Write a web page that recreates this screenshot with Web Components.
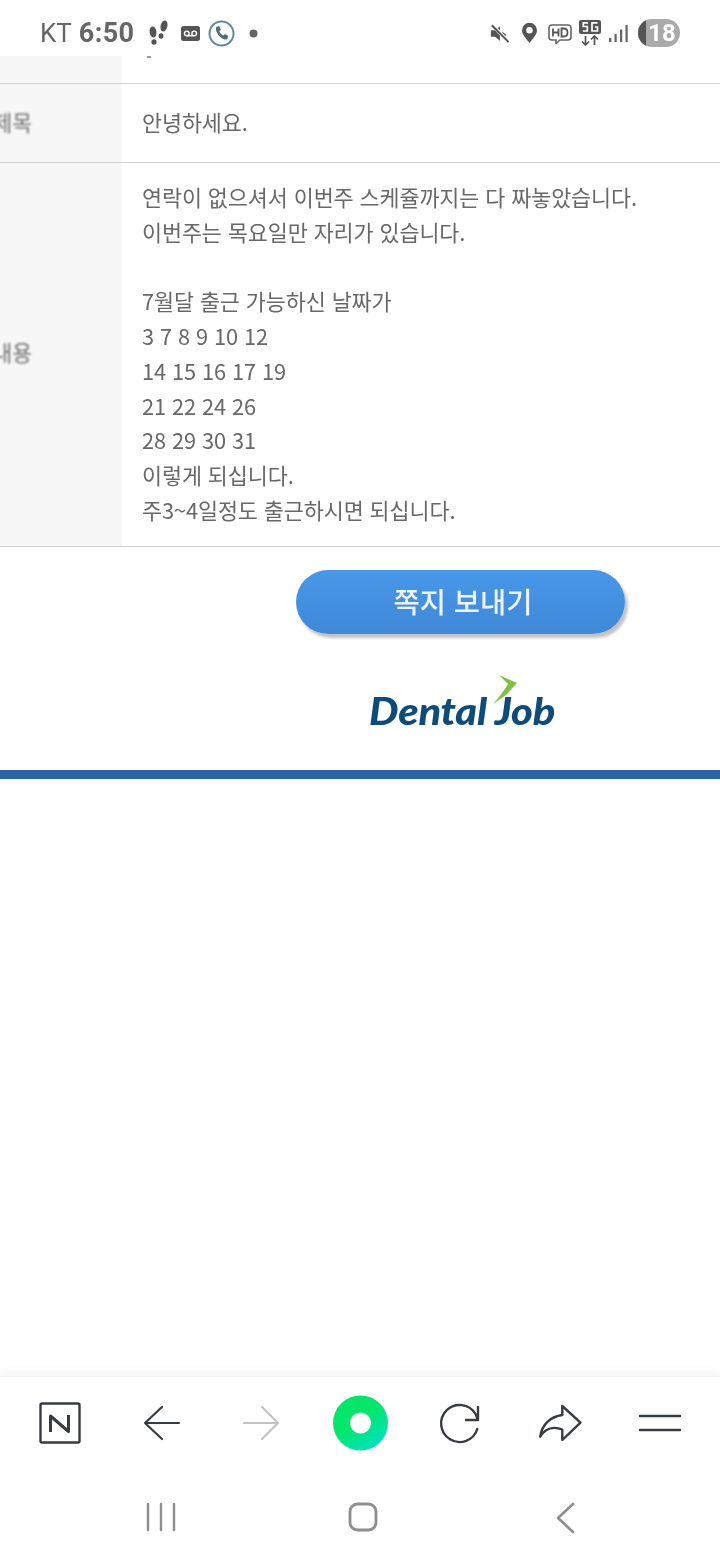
<!DOCTYPE html>
<html lang="ko">
<head>
<meta charset="utf-8">
<title>쪽지</title>
<style>
  html, body { margin: 0; padding: 0; background: #fff; }
  body { font-family: "Noto Sans CJK KR", "Noto Sans", sans-serif; }
  phone-page { width: 720px; height: 1560px; }
</style>
</head>
<body>
<phone-page>
  <status-bar></status-bar>
  <message-table>
    <message-row slot="rows" partial></message-row>
    <message-row slot="rows" label="제목" style="--row-h:78px;--pad-top:21px;--label-shift:-2px">안녕하세요.</message-row>
    <message-row slot="rows" label="내용" style="--row-h:383px;--pad-top:17px;--label-shift:-3px">연락이 없으셔서 이번주 스케쥴까지는 다 짜놓았습니다.
이번주는 목요일만 자리가 있습니다.

7월달 출근 가능하신 날짜가
3 7 8 9 10 12
14 15 16 17 19
21 22 24 26
28 29 30 31
이렇게 되십니다.
주3~4일정도 출근하시면 되십니다.</message-row>
  </message-table>
  <send-button>쪽지 보내기</send-button>
  <brand-logo></brand-logo>
  <footer-rule></footer-rule>
  <browser-toolbar></browser-toolbar>
  <nav-buttons></nav-buttons>
</phone-page>

<script>
class PhonePage extends HTMLElement {
  constructor() {
    super();
    this.attachShadow({ mode: "open" }).innerHTML = `
      <style>
        :host { display: flex; flex-direction: column; overflow: hidden; background: #fff; }
      </style>
      <slot></slot>`;
  }
}

class StatusBar extends HTMLElement {
  constructor() {
    super();
    this.attachShadow({ mode: "open" }).innerHTML = `
      <style>
        :host { display: flex; align-items: center; height: 56px; padding: 0 40px 0 40px; box-sizing: border-box;
                font-family: Roboto, "Liberation Sans", sans-serif; color: #666; filter: blur(.35px); flex: none; }
        .left, .right { display: flex; align-items: center; height: 66px; margin-top: 10px; }
        .right { margin-left: auto; }
        .carrier { font-size: 26px; }
        .time { font-size: 27px; font-weight: 700; margin-left: 7px; letter-spacing: .4px; }
        svg { display: block; flex: none; }
        .battery { position: relative; width: 42px; height: 28px; border-radius: 14px; background: #aaa; overflow: hidden;
                   color: #fff; font-size: 24px; font-weight: 700; text-align: center; line-height: 28px; margin-left: 10px; }
        .battery::before { content: ""; position: absolute; left: 0; top: 0; bottom: 0; width: 8px; background: #555; }
        .battery span { position: relative; margin-left: 6px; }
      </style>
      <div class="left">
        <span class="carrier">KT</span><span class="time">6:50</span>
        <svg width="24" height="28" viewBox="0 0 24 28" style="margin-left:12px" fill="#555">
          <ellipse cx="6" cy="13" rx="3.4" ry="5.6" transform="rotate(-6 6 13)"/>
          <ellipse cx="7" cy="23" rx="2.6" ry="2.8"/>
          <ellipse cx="17" cy="7" rx="3.4" ry="5.6" transform="rotate(14 17 7)"/>
          <ellipse cx="14" cy="17" rx="2.5" ry="2.8"/>
        </svg>
        <svg width="19" height="15" viewBox="0 0 19 15" style="margin-left:10px">
          <rect width="19" height="15" rx="2.5" fill="#555"/>
          <circle cx="5.8" cy="7.4" r="2.3" fill="none" stroke="#fff" stroke-width="1.4"/>
          <circle cx="13.2" cy="7.4" r="2.3" fill="none" stroke="#fff" stroke-width="1.4"/>
          <path d="M5.8 9.7h7.4" stroke="#fff" stroke-width="1.4"/>
        </svg>
        <svg width="27" height="27" viewBox="0 0 27 27" style="margin-left:8px">
          <circle cx="13.5" cy="13.5" r="12" fill="none" stroke="#64889c" stroke-width="2"/>
          <path d="M8.6 6.8l2.6-.8 1.7 3.8-1.600 1.400c.7 1.800 2.200 3.500 4 4.400l1.600-1.500 3.400 2-.9 2.700c-.5.8-1.600.9-2.600.6-4-1.200-7.600-5-8.800-9.500-.2-1.200 0-2.400.6-3.100z" fill="#4f6f80"/>
        </svg>
        <svg width="9" height="9" viewBox="0 0 9 9" style="margin-left:14px"><circle cx="4.5" cy="4.5" r="4" fill="#666"/></svg>
      </div>
      <div class="right">
        <svg width="20" height="21" viewBox="0 0 22 22">
          <path d="M1 7.5h4.5L11 3v16l-5.5-4.500H1z" fill="#555"/>
          <path d="M13 8.500l4.500 3.500-1 5z" fill="#555"/>
          <path d="M2.500 1.500l18 19" stroke="#fff" stroke-width="4"/>
          <path d="M2 2l18.500 18.500" stroke="#555" stroke-width="2.200"/>
        </svg>
        <svg width="17" height="22" viewBox="0 0 17 22" style="margin-left:11px">
          <path d="M8.500 21C4 15.500 1 12 1 8.300a7.500 7.500 0 0 1 15 0c0 3.700-3 7.200-7.500 12.700z" fill="#555"/>
          <circle cx="8.500" cy="8.300" r="3.200" fill="#fff"/>
        </svg>
        <svg width="24" height="20" viewBox="0 0 24 20" style="margin-left:10px;margin-top:2px">
          <path d="M4 1h16a3 3 0 0 1 3 3v9a3 3 0 0 1-3 3h-8l-4 3.500V16H4a3 3 0 0 1-3-3V4a3 3 0 0 1 3-3z" fill="#fff" stroke="#666" stroke-width="1.600"/>
          <path d="M5 4.500v8M10.500 4.500v8M5 8.500h5.500M13.500 4.500v8h2.500c2 0 3.500-1.200 3.500-4s-1.500-4-3.500-4z" fill="none" stroke="#555" stroke-width="1.800"/>
        </svg>
        <svg width="22" height="26" viewBox="0 0 22 26" style="margin-left:7px;margin-top:-1px">
          <rect width="22" height="14" rx="2" fill="#555"/>
          <path d="M9 2.800H4.300v3.700H8.300v4.500H3.800M18.500 2.800h-5.500v8.200h5.500V7h-2.500" fill="none" stroke="#fff" stroke-width="1.700"/>
          <path d="M6.500 16v9M3 21.500l3.500 3.500 3.500-3.500M15.500 25v-9M12 19.500l3.500-3.500 3.500 3.500" fill="none" stroke="#555" stroke-width="1.700"/>
        </svg>
        <svg width="19" height="17" viewBox="0 0 19 17" style="margin-left:8px;margin-top:1px">
          <rect x="0" y="13" width="2.400" height="4" fill="#666"/>
          <rect x="5.500" y="9" width="2.200" height="8" fill="#666"/>
          <rect x="11" y="4.500" width="2.200" height="12.500" fill="#666"/>
          <rect x="16.500" y="0" width="2.200" height="17" fill="#666"/>
        </svg>
        <div class="battery"><span>18</span></div>
      </div>`;
  }
}

class MessageTable extends HTMLElement {
  constructor() {
    super();
    this.attachShadow({ mode: "open" }).innerHTML = `
      <style>
        :host { display: block; flex: none; overflow: hidden; }
      </style>
      <slot name="rows"></slot>`;
  }
}

class MessageRow extends HTMLElement {
  constructor() {
    super();
    const partial = this.hasAttribute("partial");
    this.attachShadow({ mode: "open" }).innerHTML = `
      <style>
        :host { display: grid; grid-template-columns: 122px 1fr; border-bottom: 1px solid #d2d2d2;
                height: var(--row-h, 27px); box-sizing: content-box; overflow: hidden;
                font-family: "Noto Sans CJK KR", "Noto Sans", sans-serif; }
        .label { height: 100%; box-sizing: border-box; display: flex; align-items: center; justify-content: flex-end;
                 padding-right: 90px; white-space: nowrap; font-size: 21.5px; color: #6e6e6e; filter: blur(.9px); }
        .label span { position: relative; top: var(--label-shift, 0); }
        .label-bg { background: #f7f7f7; overflow: hidden; }
        .body { padding: var(--pad-top, 0) 0 0 20px; font-size: 21.8px; line-height: 34.75px; color: #686868;
                white-space: pre-line; filter: blur(.45px); letter-spacing: -.1px; }
        .tick { width: 4px; height: 2px; background: #999; margin: 0 0 0 25px; }
      </style>
      ${partial
        ? `<div class="label-bg"></div><div><div class="tick"></div></div>`
        : `<div class="label-bg"><div class="label"><span>${this.getAttribute("label")}</span></div></div><div class="body"><slot></slot></div>`}`;
  }
}

class SendButton extends HTMLElement {
  constructor() {
    super();
    this.attachShadow({ mode: "open" }).innerHTML = `
      <style>
        :host { display: block; flex: none; margin: 23px 0 0 296px; width: 329px; }
        .btn { height: 64px; border-radius: 32px; display: flex; align-items: center; justify-content: center;
               background: linear-gradient(#4897e8, #4088d8); box-shadow: 3px 4px 3px rgba(120,120,120,.45);
               color: #eef3fa; font-size: 28.5px; font-weight: 500; font-family: "Noto Sans CJK KR", sans-serif;
               filter: blur(.5px); padding: 0 0 4px 5px; box-sizing: border-box; }
      </style>
      <div class="btn"><slot></slot></div>`;
  }
}

class BrandLogo extends HTMLElement {
  constructor() {
    super();
    this.attachShadow({ mode: "open" }).innerHTML = `
      <style>
        :host { display: block; flex: none; margin: 36px 0 0 369px; width: 186px; height: 60px; position: relative; }
        .word { position: absolute; left: 0; bottom: 0; font: italic 900 38px Lato, "Open Sans", sans-serif;
                color: #0f4b78; white-space: nowrap; line-height: 40px; letter-spacing: -.2px;
                transform: scaleX(1.095); transform-origin: left center; filter: blur(.45px); }
        svg { position: absolute; left: 122px; top: 5px; }
      </style>
      <span class="word">Dental Job</span>
      <svg width="28" height="30" viewBox="0 0 28 30"><path d="M8 0l18 8-11 12-13 9C8 22 13 16 17 9z" fill="#7fc241"/></svg>`;
  }
}

class FooterRule extends HTMLElement {
  constructor() {
    super();
    this.attachShadow({ mode: "open" }).innerHTML = `
      <style>
        :host { display: block; flex: none; height: 9px; margin-top: 40px; background: #2c65a5; }
      </style>`;
  }
}

class BrowserToolbar extends HTMLElement {
  constructor() {
    super();
    this.attachShadow({ mode: "open" }).innerHTML = `
      <style>
        :host { display: grid; grid-template-columns: repeat(7, 100px); justify-content: center; align-items: center;
                height: 92px; flex: none; margin-top: auto; border-top: 1px solid #eff0f2;
                box-shadow: 0 -6px 6px rgba(240,242,246,.5); background: #fff; }
        div { display: flex; justify-content: center; align-items: center; }
        svg { display: block; overflow: visible; }
      </style>
      <div><svg width="42" height="42" viewBox="0 0 42 42" fill="none" stroke="#373c42" stroke-width="2.400" stroke-linejoin="round">
        <rect x="1.500" y="1.500" width="39" height="39" rx="1.500"/>
        <path d="M11.500 30V14l18 15.500V13" stroke-width="3"/></svg></div>
      <div><svg width="40" height="36" viewBox="0 0 40 36" fill="none" stroke="#373c42" stroke-width="2.200" stroke-linecap="round" stroke-linejoin="round">
        <path d="M39 18H5M22 2L5 18l17 16"/></svg></div>
      <div><svg width="36" height="36" viewBox="0 0 36 36" fill="none" stroke="#c4c4c4" stroke-width="2.200" stroke-linecap="round" stroke-linejoin="round">
        <path d="M2 18H36M20 2l16 16-16 16"/></svg></div>
      <div><svg width="56" height="56" viewBox="0 0 56 56">
        <defs><linearGradient id="g" x1="0.200" y1="0.100" x2="0.800" y2="0.950"><stop offset="0.400" stop-color="#04e66a"/><stop offset="1" stop-color="#02e0c0"/></linearGradient></defs>
        <circle cx="28.500" cy="28" r="27.500" fill="url(#g)"/><circle cx="28.500" cy="28" r="10.500" fill="#fff"/></svg></div>
      <div><svg width="42" height="42" viewBox="0 0 42 42" fill="none" stroke="#373c42" stroke-width="2.400" stroke-linecap="round" stroke-linejoin="round">
        <path d="M38.300 27A18.500 18.500 0 1 1 36.500 12L39 18M39 5v13H27"/></svg></div>
      <div><svg width="44" height="38" viewBox="0 0 44 38" fill="none" stroke="#373c42" stroke-width="2.400" stroke-linecap="round" stroke-linejoin="round">
        <path d="M24.300 2L42.500 18.700 24.300 36V25.500C15 22 7 25 2.200 32.700 4 20 13 12.500 24.300 11z"/></svg></div>
      <div><svg width="42" height="18" viewBox="0 0 42 18" stroke="#373c42" stroke-width="2.400" stroke-linecap="round">
        <path d="M1 2h40M1 16h40"/></svg></div>`;
  }
}

class NavButtons extends HTMLElement {
  constructor() {
    super();
    this.attachShadow({ mode: "open" }).innerHTML = `
      <style>
        :host { display: grid; grid-template-columns: repeat(3, 202px); padding: 29px 0 0 60px; height: 62px; flex: none; align-items: start; }
        div { display: flex; justify-content: center; padding-top: 4px; }
        svg { display: block; }
      </style>
      <div><svg width="30" height="30" viewBox="0 0 30 30" stroke="#8e8e8e" stroke-width="2.400" stroke-linecap="round">
        <path d="M2 2v26M15 2v26M28 2v26"/></svg></div>
      <div><svg width="30" height="30" viewBox="0 0 30 30" fill="none" stroke="#8e8e8e" stroke-width="2.800">
        <rect x="2" y="2" width="26" height="26" rx="7.500"/></svg></div>
      <div><svg width="20" height="32" viewBox="0 0 20 32" fill="none" stroke="#8e8e8e" stroke-width="2.600" stroke-linecap="round" stroke-linejoin="round">
        <path d="M18 2L3 16l15 14"/></svg></div>`;
  }
}

customElements.define("phone-page", PhonePage);
customElements.define("status-bar", StatusBar);
customElements.define("message-table", MessageTable);
customElements.define("message-row", MessageRow);
customElements.define("send-button", SendButton);
customElements.define("brand-logo", BrandLogo);
customElements.define("footer-rule", FooterRule);
customElements.define("browser-toolbar", BrowserToolbar);
customElements.define("nav-buttons", NavButtons);
</script>
</body>
</html>
